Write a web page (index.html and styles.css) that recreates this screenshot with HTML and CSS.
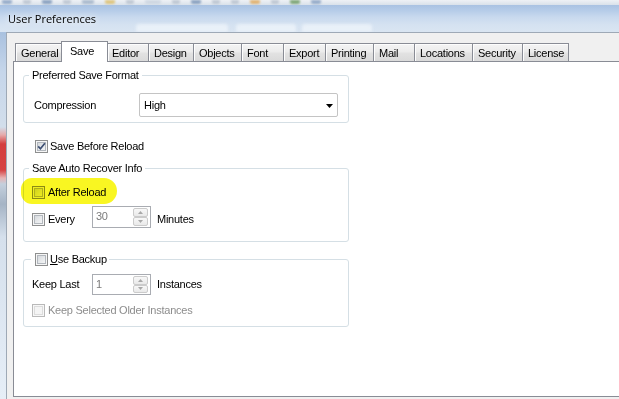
FILE: index.html
```html
<!DOCTYPE html>
<html>
<head>
<meta charset="utf-8">
<title>User Preferences</title>
<link rel="stylesheet" href="styles.css">
</head>
<body>
<div class="screen">
  <div class="bgtoolbar">
    <span class="ti c1"></span><span class="ti c2"></span><span class="ti c3"></span><span class="ti c2"></span><span class="ti c4"></span><span class="ti c5"></span><span class="ti c2"></span><span class="ti c6"></span><span class="ti c2"></span><span class="ti c3"></span><span class="ti c2"></span><span class="ti c2"></span><span class="ti c7"></span><span class="ti c2"></span><span class="ti c8"></span><span class="ti c1"></span>
  </div>
  <div class="titlebar">
    <span class="title">User Preferences</span>
    <span class="ghost gh1"></span>
    <span class="ghost gh2"></span>
    <span class="ghost gh3"></span>
  </div>
  <div class="body-row">
    <div class="frame-left"></div>
    <div class="client">
      <div class="tabs">
        <div class="tab t-general">General</div>
        <div class="tab sel t-save">Save</div>
        <div class="tab after-sel t-editor">Editor</div>
        <div class="tab t-design">Design</div>
        <div class="tab t-objects">Objects</div>
        <div class="tab t-font">Font</div>
        <div class="tab t-export">Export</div>
        <div class="tab t-printing">Printing</div>
        <div class="tab t-mail">Mail</div>
        <div class="tab t-locations">Locations</div>
        <div class="tab t-security">Security</div>
        <div class="tab last t-license">License</div>
      </div>
      <div class="page">
        <fieldset class="group g-format">
          <legend>Preferred Save Format</legend>
          <div class="row">
            <span class="lbl-comp">Compression</span>
            <div class="combo">
              <span>High</span>
              <svg class="combo-arrow" width="7" height="4" viewBox="0 0 7 4"><polygon points="0,0 7,0 3.5,4" fill="#000"/></svg>
            </div>
          </div>
        </fieldset>

        <div class="check-row top-check">
          <span class="cb checked"><svg width="9" height="9" viewBox="0 0 9 9"><path d="M1.2 4.4 L3.4 6.8 L7.9 1.2" fill="none" stroke="#3d4f73" stroke-width="1.7"/></svg></span>
          <span>Save Before Reload</span>
        </div>

        <fieldset class="group g-recover">
          <legend>Save Auto Recover Info</legend>
          <div class="check-row in-group marked">
            <span class="hl"></span>
            <span class="cb"></span>
            <span>After Reload</span>
          </div>
          <div class="spin-row every-row">
            <span class="cb"></span>
            <span class="spin-lbl every-lbl">Every</span>
            <div class="spin tall">
              <span class="spin-val">30</span>
              <div class="spin-btns">
                <span class="sb"><svg width="5" height="3" viewBox="0 0 5 3"><polygon points="2.5,0 5,3 0,3" fill="#a8a8a8"/></svg></span>
                <span class="sb"><svg width="5" height="3" viewBox="0 0 5 3"><polygon points="0,0 5,0 2.5,3" fill="#a8a8a8"/></svg></span>
              </div>
            </div>
            <span class="spin-after">Minutes</span>
          </div>
        </fieldset>

        <fieldset class="group g-backup">
          <legend><span class="legend-check"><span class="cb"></span><span><u>U</u>se Backup</span></span></legend>
          <div class="spin-row keep-row">
            <span class="spin-lbl keep-lbl">Keep Last</span>
            <div class="spin">
              <span class="spin-val">1</span>
              <div class="spin-btns">
                <span class="sb"><svg width="5" height="3" viewBox="0 0 5 3"><polygon points="2.5,0 5,3 0,3" fill="#a8a8a8"/></svg></span>
                <span class="sb"><svg width="5" height="3" viewBox="0 0 5 3"><polygon points="0,0 5,0 2.5,3" fill="#a8a8a8"/></svg></span>
              </div>
            </div>
            <span class="spin-after">Instances</span>
          </div>
          <div class="check-row in-group disabled-row">
            <span class="cb disabled"></span>
            <span>Keep Selected Older Instances</span>
          </div>
        </fieldset>
      </div>
    </div>
  </div>
</div>
</body>
</html>
```

FILE: styles.css
```css
* { box-sizing: border-box; }
html, body { margin: 0; padding: 0; }
body {
  width: 619px;
  height: 399px;
  overflow: hidden;
  font-family: "Liberation Sans", Arial, sans-serif;
  font-size: 11px;
  letter-spacing: -0.25px;
  color: #000;
  background: #f0f0f0;
}
.screen {
  display: flex;
  flex-direction: column;
  height: 399px;
}

/* blurred toolbar of the window behind */
.bgtoolbar {
  height: 5px;
  display: flex;
  align-items: flex-start;
  padding-left: 2px;
  background: linear-gradient(#eef1f5, #d9e1ea);
  overflow: hidden;
}
.ti {
  width: 10px;
  height: 4px;
  margin-right: 11px;
  border-radius: 0 0 2px 2px;
  filter: blur(1px);
  opacity: 0.75;
}
.c1 { background: #7c98bd; }
.c2 { background: #b3bdca; width: 8px; }
.c3 { background: #6d8bb1; }
.c4 { background: #98abc2; width: 12px; }
.c5 { background: #dcb95a; }
.c6 { background: #c8d2de; width: 16px; }
.c7 { background: #e0a24a; }
.c8 { background: #5e9150; }

/* glass title bar */
.titlebar {
  height: 27px;
  display: flex;
  align-items: flex-end;
  background: linear-gradient(#a9c2e2 0, #b4cbe8 5px, #c8d9ee 12px, #d5e2f1 20px, #d9e5f2 27px);
  overflow: hidden;
}
.title {
  align-self: flex-start;
  padding: 6px 0 0 8px;
  font-family: "Open Sans", "Liberation Sans", sans-serif;
  font-size: 11px;
  line-height: 15px;
  letter-spacing: 0;
  color: #000;
  text-shadow: 0 0 6px #fff, 0 0 10px rgba(255,255,255,0.9);
}
.ghost {
  height: 8px;
  border-radius: 3px 3px 0 0;
  background: rgba(238, 244, 250, 0.8);
  filter: blur(1.5px);
}
.gh1 { width: 92px; margin-left: 40px; }
.gh2 { width: 60px; margin-left: 8px; }
.gh3 { width: 70px; margin-left: 6px; }

.body-row {
  flex: 1;
  display: flex;
  min-height: 0;
}
.frame-left {
  width: 6px;
  flex: none;
  background: linear-gradient(#a9c1df 0, #c6d6ea 40px, #d2deeb 95px, #e6a9a9 103px, #d43d3d 112px, #d64242 138px, #e7b4b4 146px, #c4d0dd 152px, #a5b4c5 172px, #d5e0ec 205px, #e6eef7 100%);
}
.client {
  flex: 1;
  display: flex;
  flex-direction: column;
  background: #f0f0f0;
  border-top: 1px solid #9ea9b6;
  border-left: 1px solid #9ea9b6;
  min-width: 0;
}

/* tabs */
.tabs {
  height: 28px;
  display: flex;
  align-items: flex-end;
  padding: 8px 0 0 8px;
  position: relative;
  z-index: 1;
}
.tab {
  flex: none;
  height: 18px;
  border: 1px solid #898c95;
  border-right: none;
  border-bottom: none;
  padding: 3px 0 0 5px;
  line-height: 13px;
  white-space: nowrap;
  background: linear-gradient(#f4f4f4, #ececec 45%, #e2e2e2 55%, #dadada);
  box-shadow: inset 1px 1px 0 #fdfdfd;
}
.tab.sel {
  height: 21px;
  margin-bottom: -1px;
  border-right: 1px solid #898c95;
  padding-left: 8px;
  background: #fff;
  box-shadow: none;
}
.tab.after-sel { border-left: none; padding-left: 4px; }
.tab.last { border-right: 1px solid #898c95; }
.t-general { width: 46px; }
.t-save { width: 47px; }
.t-editor { width: 40px; }
.t-design { width: 45px; }
.t-objects { width: 48px; }
.t-font { width: 42px; }
.t-export { width: 42px; }
.t-printing { width: 48px; }
.t-mail { width: 41px; }
.t-locations { width: 58px; }
.t-security { width: 50px; }
.t-license { width: 47px; }

/* tab page */
.page {
  flex: 1;
  margin: 0 0 2px 6px;
  border: 1px solid #898c95;
  border-right: none;
  background: #fff;
  padding: 7px 0 0 9px;
}

/* group boxes */
.group {
  width: 326px;
  margin: 0;
  border: 1px solid #d5dfe5;
  border-radius: 3px;
  padding: 0 9px 0 5px;
  min-inline-size: 0;
}
.group legend {
  padding: 0 3px;
  line-height: 13px;
}
.g-format { padding-top: 11px; padding-bottom: 5px; }
.g-recover { margin-top: 9px; padding-top: 11px; padding-bottom: 13px; }
.g-backup { margin-top: 11px; padding-top: 8px; padding-bottom: 9px; }
.g-backup legend { margin-left: 2px; padding: 0 2px 0 4px; }
.legend-check { display: flex; align-items: center; gap: 2px; }

.row {
  display: flex;
  align-items: center;
  margin-left: 5px;
}
.lbl-comp { width: 105px; line-height: 13px; }
.combo {
  width: 199px;
  height: 24px;
  border: 1px solid #c4c4c4;
  border-radius: 2px;
  background: #fff;
  display: flex;
  align-items: center;
  justify-content: space-between;
  padding: 0 4px 0 4px;
  line-height: 13px;
}
.combo-arrow { display: block; margin-top: 1px; }

/* checkboxes */
.check-row {
  display: flex;
  align-items: center;
  gap: 3px;
  line-height: 13px;
  height: 13px;
}
.top-check { margin: 17px 0 0 12px; gap: 2px; }
.in-group { margin-left: 3px; }
.marked { position: relative; }
.hl {
  position: absolute;
  left: -11px;
  top: -8px;
  width: 96px;
  height: 26px;
  border-radius: 11px 13px 13px 11px;
  background: #f9f622;
  mix-blend-mode: multiply;
  z-index: 2;
}
.cb {
  width: 13px;
  height: 13px;
  flex: none;
  border: 1px solid #8e8f8f;
  background: linear-gradient(135deg, #cdd1d6 0%, #e8eaec 55%, #fbfbfb 100%);
  box-shadow: inset 0 0 0 1px #f6f6f6, inset 0 0 0 2px #b2b7bd;
  display: flex;
  align-items: center;
  justify-content: center;
}
.cb svg { display: block; }
.cb.disabled {
  border-color: #b9b9b9;
  background: #f4f4f4;
  box-shadow: inset 0 0 0 1px #f7f7f7, inset 0 0 0 2px #dcdcdc;
}
.disabled-row { margin-top: 9px; color: #8d8d8d; }

/* spin rows */
.spin-row {
  display: flex;
  align-items: flex-start;
  line-height: 13px;
}
.every-row { margin: 7px 0 0 3px; }
.every-row .cb { margin-top: 7px; margin-right: 3px; }
.every-lbl { width: 44px; margin-top: 7px; }
.keep-row { margin-left: 3px; }
.keep-lbl { width: 60px; margin-top: 4px; }
.spin-after { margin: 7px 0 0 6px; }
.keep-row .spin-after { margin-top: 4px; }
.spin {
  width: 59px;
  height: 21px;
  display: flex;
  border: 1px solid #a9acb2;
  background: #fff;
}
.spin.tall { height: 22px; }
.spin-val {
  flex: 1;
  padding: 3px 0 0 3px;
  color: #7a7a7a;
}
.spin-btns {
  width: 15px;
  margin: 1px 2px 1px 0;
  display: flex;
  flex-direction: column;
}
.sb {
  flex: 1;
  border: 1px solid #cbcbcb;
  border-radius: 2px;
  background: linear-gradient(#f8f8f8, #e9e9e9);
  display: flex;
  align-items: center;
  justify-content: center;
}
.sb svg { display: block; }
```
